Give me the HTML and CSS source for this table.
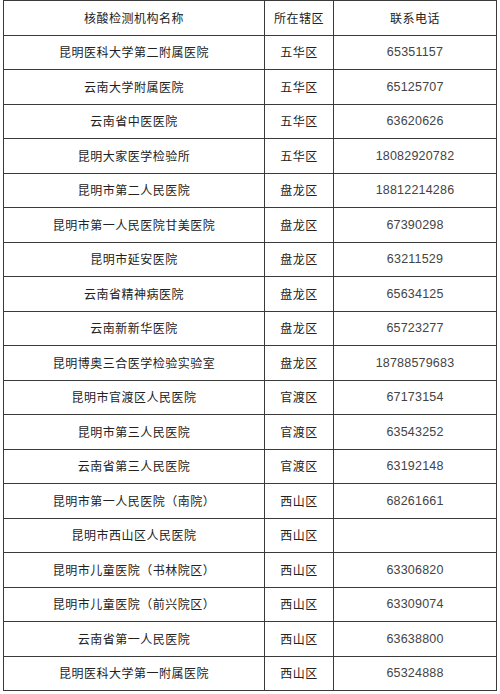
FILE: index.html
```html
<!DOCTYPE html>
<html lang="zh-CN">
<head>
<meta charset="utf-8">
<title>核酸检测机构</title>
<link rel="stylesheet" href="styles.css">
</head>
<body>
<table class="list">
  <colgroup><col class="c-name"><col class="c-area"><col class="c-tel"></colgroup>
  <thead>
    <tr><th>核酸检测机构名称</th><th>所在辖区</th><th>联系电话</th></tr>
  </thead>
  <tbody>
    <tr><td>昆明医科大学第二附属医院</td><td>五华区</td><td class="num">65351157</td></tr>
    <tr><td>云南大学附属医院</td><td>五华区</td><td class="num">65125707</td></tr>
    <tr><td>云南省中医医院</td><td>五华区</td><td class="num">63620626</td></tr>
    <tr><td>昆明大家医学检验所</td><td>五华区</td><td class="num">18082920782</td></tr>
    <tr><td>昆明市第二人民医院</td><td>盘龙区</td><td class="num">18812214286</td></tr>
    <tr><td>昆明市第一人民医院甘美医院</td><td>盘龙区</td><td class="num">67390298</td></tr>
    <tr><td>昆明市延安医院</td><td>盘龙区</td><td class="num">63211529</td></tr>
    <tr><td>云南省精神病医院</td><td>盘龙区</td><td class="num">65634125</td></tr>
    <tr><td>云南新新华医院</td><td>盘龙区</td><td class="num">65723277</td></tr>
    <tr><td>昆明博奥三合医学检验实验室</td><td>盘龙区</td><td class="num">18788579683</td></tr>
    <tr><td>昆明市官渡区人民医院</td><td>官渡区</td><td class="num">67173154</td></tr>
    <tr><td>昆明市第三人民医院</td><td>官渡区</td><td class="num">63543252</td></tr>
    <tr><td>云南省第三人民医院</td><td>官渡区</td><td class="num">63192148</td></tr>
    <tr><td>昆明市第一人民医院（南院）</td><td>西山区</td><td class="num">68261661</td></tr>
    <tr><td>昆明市西山区人民医院</td><td>西山区</td><td class="num"></td></tr>
    <tr><td>昆明市儿童医院（书林院区）</td><td>西山区</td><td class="num">63306820</td></tr>
    <tr><td>昆明市儿童医院（前兴院区）</td><td>西山区</td><td class="num">63309074</td></tr>
    <tr><td>云南省第一人民医院</td><td>西山区</td><td class="num">63638800</td></tr>
    <tr><td>昆明医科大学第一附属医院</td><td>西山区</td><td class="num">65324888</td></tr>
  </tbody>
</table>
</body>
</html>
```
FILE: styles.css
```css
html, body {
  margin: 0;
  padding: 0;
  background: #ffffff;
}
body {
  font-family: "Noto Sans CJK SC", "Liberation Sans", sans-serif;
}
.list {
  margin-left: 3px;
  border-collapse: separate;
  border-spacing: 1px;
  background: #3a3a3a;
  table-layout: fixed;
  width: 494px;
}
.c-name { width: 260px; }
.c-area { width: 68px; }
.c-tel { width: 162px; }
.list th,
.list td {
  background: #ffffff;
  height: 33.5px;
  padding: 0;
  text-align: center;
  vertical-align: middle;
  font-weight: normal;
  font-size: 12px;
  letter-spacing: 0.5px;
  color: #222222;
  line-height: 1;
}
.list td.num {
  font-family: "Liberation Sans", sans-serif;
  font-size: 12.5px;
  letter-spacing: 0.2px;
  color: #444444;
}
```
